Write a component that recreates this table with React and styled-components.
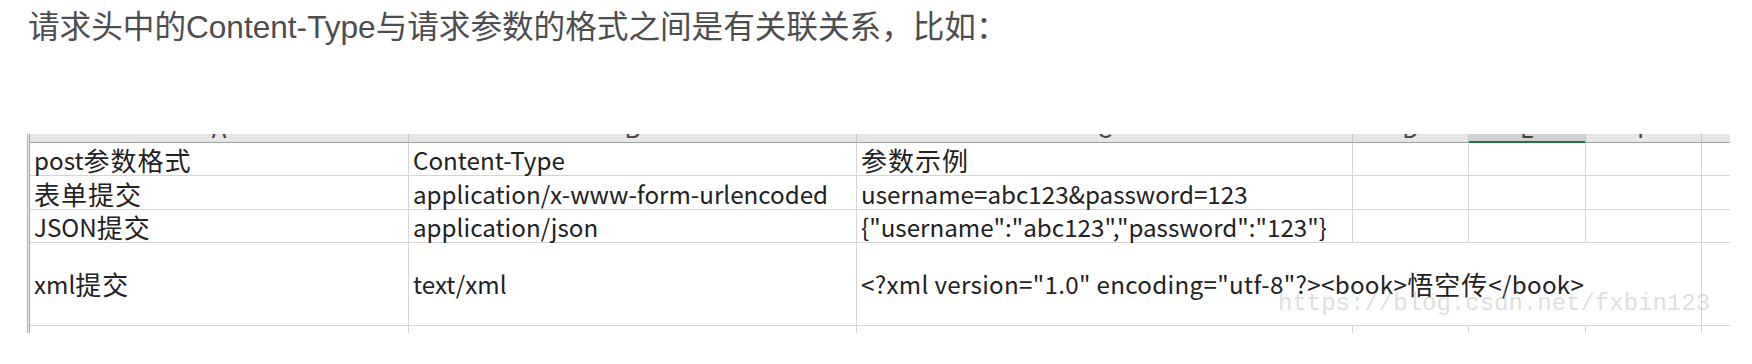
import React from 'react';
import styled, { createGlobalStyle } from 'styled-components';

const GlobalStyle = createGlobalStyle`
  html, body { margin: 0; padding: 0; background: #ffffff; }
  body { width: 1752px; height: 364px; overflow: hidden; }
`;

const Page = styled.div`
  display: flex;
  flex-direction: column;
  padding-top: 9px;
`;

const Heading = styled.p`
  margin: 0 0 0 28px;
  font-family: "Liberation Sans", "Noto Sans CJK SC", sans-serif;
  font-size: 31.6px;
  line-height: 36px;
  color: #4d4d4d;
  white-space: nowrap;
`;

const Sheet = styled.div`
  position: relative;
  display: flex;
  width: 1703px;
  margin: 89px 0 0 27px;
`;

const Gutter = styled.div`
  width: 4px;
  box-sizing: border-box;
  border-left: 1px solid #b4b4b4;
  border-right: 1px solid #a8a8a8;
  background: #e8e8e8;
`;

const Grid = styled.div`
  display: grid;
  grid-template-columns: 379px 448px 496px 116px 117px 116px 28px;
  grid-template-rows: 9px 33px 34px 33px 83px 7px;
`;

const ColHead = styled.div`
  box-sizing: border-box;
  display: flex;
  justify-content: center;
  align-items: flex-end;
  overflow: hidden;
  background: ${p => (p.$selected ? '#d2d2d2' : '#e6e6e6')};
  border-right: ${p => (p.$last ? 'none' : '1px solid #c4c4c4')};
  border-bottom: 1px solid ${p => (p.$selected ? '#217346' : '#9f9f9f')};
  box-shadow: ${p => (p.$selected ? 'inset 0 -1px 0 #217346' : 'none')};
  font-family: "Noto Sans CJK SC", sans-serif;
  font-size: 24px;
  line-height: 28px;
  color: #444444;
`;

const Cell = styled.div`
  box-sizing: border-box;
  display: flex;
  align-items: ${p => (p.$middle ? 'center' : 'flex-end')};
  padding: 0 0 ${p => (p.$middle ? 0 : 1)}px 4px;
  grid-column: ${p => (p.$span ? `span ${p.$span}` : 'auto')};
  border-right: ${p => (p.$last ? 'none' : '1px solid #d4d4d4')};
  border-bottom: ${p => (p.$end ? 'none' : '1px solid #d4d4d4')};
  font-family: "Noto Sans CJK SC", sans-serif;
  font-size: 24.2px;
  line-height: 28px;
  letter-spacing: ${p => p.$tracking || 0}px;
  color: #222222;
  white-space: nowrap;
`;

const Han = styled.span`
  font-size: 26px;
  letter-spacing: 1px;
`;

const Watermark = styled.span`
  position: absolute;
  left: 1251px;
  top: 158px;
  font-family: "Liberation Mono", monospace;
  font-size: 24px;
  line-height: 24px;
  color: rgba(160, 160, 160, 0.36);
  white-space: nowrap;
  pointer-events: none;
`;

const CJK = /([\u3000-\u303f\u4e00-\u9fff\uff00-\uffef]+)/;

const Text = ({ children }) =>
  String(children)
    .split(CJK)
    .filter(Boolean)
    .map((part, i) => (CJK.test(part) ? <Han key={i}>{part}</Han> : <React.Fragment key={i}>{part}</React.Fragment>));

const letters = ['A', 'B', 'C', 'D', 'E', 'F', ''];

const rows = [
  ['post参数格式', 'Content-Type', '参数示例'],
  ['表单提交', 'application/x-www-form-urlencoded', 'username=abc123&password=123'],
  ['JSON提交', 'application/json', '{"username":"abc123","password":"123"}'],
];

export default function App() {
  return (
    <>
      <GlobalStyle />
      <Page>
        <Heading>请求头中的Content-Type与请求参数的格式之间是有关联关系，比如：</Heading>
        <Sheet>
          <Gutter />
          <Grid>
            {letters.map((l, i) => (
              <ColHead key={`h${i}`} $selected={l === 'E'} $last={i === 6}>
                {l}
              </ColHead>
            ))}
            {rows.map((r, ri) => (
              <React.Fragment key={`r${ri}`}>
                {r.map((t, ci) => (
                  <Cell key={ci}>
                    <Text>{t}</Text>
                  </Cell>
                ))}
                <Cell />
                <Cell />
                <Cell />
                <Cell $last />
              </React.Fragment>
            ))}
            <Cell $middle>
              <Text>xml提交</Text>
            </Cell>
            <Cell $middle>text/xml</Cell>
            <Cell $middle $span={4} $tracking={0.3}>
              <Text>{'<?xml version="1.0" encoding="utf-8"?><book>悟空传</book>'}</Text>
            </Cell>
            <Cell $last />
            {letters.map((l, i) => (
              <Cell key={`e${i}`} $end $last={i === 6} />
            ))}
          </Grid>
          <Watermark>https://blog.csdn.net/fxbin123</Watermark>
        </Sheet>
      </Page>
    </>
  );
}
